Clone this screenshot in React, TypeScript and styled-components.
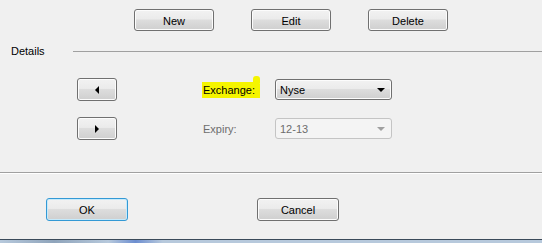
import React from 'react';
import styled, { createGlobalStyle } from 'styled-components';

const GlobalStyle = createGlobalStyle`
  html, body {
    margin: 0;
    padding: 0;
    background: #f0f0f0;
  }
  body {
    font-family: 'Liberation Sans', Arial, sans-serif;
    font-size: 11px;
    color: #000;
  }
`;

const App: React.FC = () => {
  return (
    <StyledWindow>
      <GlobalStyle />
      <StyledToolbar>
        <StyledButton>New</StyledButton>
        <StyledButton>Edit</StyledButton>
        <StyledButton>Delete</StyledButton>
      </StyledToolbar>

      <StyledGroupHeader>
        <StyledGroupTitle>Details</StyledGroupTitle>
        <StyledGroupLine />
      </StyledGroupHeader>

      <StyledDetails>
        <StyledRow>
          <StyledArrowButton>
            <StyledTriangle direction="left" />
          </StyledArrowButton>
          <StyledLabel>
            <StyledHighlight>Exchange:</StyledHighlight>
          </StyledLabel>
          <StyledCombo>
            <span>Nyse</span>
            <StyledComboArrow />
          </StyledCombo>
        </StyledRow>
        <StyledRow>
          <StyledArrowButton>
            <StyledTriangle direction="right" />
          </StyledArrowButton>
          <StyledLabel disabled>Expiry:</StyledLabel>
          <StyledCombo disabled>
            <span>12-13</span>
            <StyledComboArrow disabled />
          </StyledCombo>
        </StyledRow>
      </StyledDetails>

      <StyledSeparator />

      <StyledFooter>
        <StyledButton wide primary>OK</StyledButton>
        <StyledButton wide>Cancel</StyledButton>
      </StyledFooter>

      <StyledSpacer />
      <StyledTaskbarEdge />
    </StyledWindow>
  );
};

const StyledWindow = styled.div`
  width: 542px;
  height: 243px;
  display: flex;
  flex-direction: column;
  background: #f0f0f0;
  overflow: hidden;
`;

const StyledToolbar = styled.div`
  display: flex;
  gap: 37px;
  padding: 9px 0 0 134px;
`;

const StyledButton = styled.div<{ wide?: boolean; primary?: boolean }>`
  box-sizing: border-box;
  width: ${(p) => (p.wide ? '82px' : '80px')};
  height: ${(p) => (p.wide ? '23px' : '22px')};
  display: flex;
  align-items: center;
  justify-content: center;
  border: 1px solid ${(p) => (p.primary ? '#3399d5' : '#707070')};
  border-radius: 3px;
  background: linear-gradient(
    to bottom,
    #f2f2f2 0%,
    #ebebeb 45%,
    #dddddd 50%,
    #cfcfcf 100%
  );
  box-shadow: inset 0 0 0 1px ${(p) => (p.primary ? '#c6eafb' : '#fcfcfc')};
  padding-top: 1px;
`;

const StyledGroupHeader = styled.div`
  display: flex;
  align-items: center;
  height: 20px;
  margin-top: 10px;
`;

const StyledGroupTitle = styled.div`
  width: 62px;
  padding-left: 11px;
  margin-top: -1px;
`;

const StyledGroupLine = styled.div`
  flex: 1;
  height: 1px;
  background: #a0a0a0;
`;

const StyledDetails = styled.div`
  display: flex;
  flex-direction: column;
  gap: 16px;
  margin-top: 17px;
  padding-left: 77px;
`;

const StyledRow = styled.div`
  display: flex;
  align-items: center;
  height: 23px;
`;

const StyledArrowButton = styled(StyledButton)`
  width: 40px;
  height: 23px;
  padding-top: 0;
`;

const StyledTriangle = styled.div<{ direction: 'left' | 'right' }>`
  width: 0;
  height: 0;
  border-top: 4px solid transparent;
  border-bottom: 4px solid transparent;
  ${(p) =>
    p.direction === 'left'
      ? 'border-right: 4px solid #000;'
      : 'border-left: 4px solid #000;'}
`;

const StyledLabel = styled.div<{ disabled?: boolean }>`
  width: 72px;
  margin-left: 86px;
  color: ${(p) => (p.disabled ? '#6d6d6d' : '#000')};
`;

const StyledHighlight = styled.span`
  position: relative;
  display: inline-block;
  background: #f5f500;
  margin-left: -1px;
  padding: 2px 5px 2px 1px;
  line-height: 12px;
  border-top-right-radius: 2px;

  /* the marker stroke pokes up at the right end */
  &::after {
    content: '';
    position: absolute;
    right: 0;
    top: -6px;
    width: 7px;
    height: 7px;
    background: #f5f500;
    border-radius: 3px 3px 0 0;
  }
`;

const StyledCombo = styled.div<{ disabled?: boolean }>`
  box-sizing: border-box;
  width: 117px;
  height: 21px;
  display: flex;
  align-items: center;
  justify-content: space-between;
  padding: 0 6px 0 4px;
  border: 1px solid ${(p) => (p.disabled ? '#c4c4c4' : '#707070')};
  border-radius: 3px;
  color: ${(p) => (p.disabled ? '#6d6d6d' : '#000')};
  background: ${(p) =>
    p.disabled
      ? '#f4f4f4'
      : 'linear-gradient(to bottom, #f2f2f2 0%, #ebebeb 45%, #dddddd 50%, #cfcfcf 100%)'};
  box-shadow: inset 0 0 0 1px ${(p) => (p.disabled ? '#f4f4f4' : '#fcfcfc')};
`;

const StyledComboArrow = styled.div<{ disabled?: boolean }>`
  width: 0;
  height: 0;
  border-left: 4px solid transparent;
  border-right: 4px solid transparent;
  border-top: 4px solid ${(p) => (p.disabled ? '#a0a0a0' : '#000')};
`;

const StyledSeparator = styled.div`
  margin-top: 32px;
  height: 1px;
  background: #a0a0a0;
  border-bottom: 1px solid #ffffff;
`;

const StyledFooter = styled.div`
  display: flex;
  gap: 129px;
  margin-top: 24px;
  padding-left: 46px;
`;

const StyledSpacer = styled.div`
  flex: 1;
`;

const StyledTaskbarEdge = styled.div`
  height: 3px;
  border-top: 1px solid #3b4a5a;
  background: linear-gradient(
    to right,
    #b7c9dc 0%,
    #8fa4bb 10%,
    #b7c9dc 20%,
    #6d8ed0 25%,
    #b7c9dc 30%,
    #b7c9dc 100%
  );
`;

export default App;
